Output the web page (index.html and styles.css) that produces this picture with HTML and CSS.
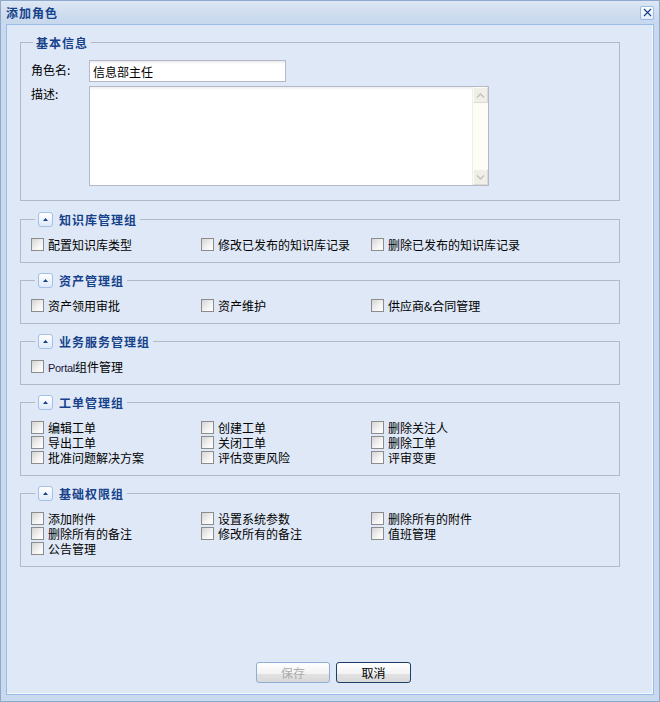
FILE: index.html
```html
<!DOCTYPE html>
<html lang="zh-CN">
<head>
<meta charset="utf-8">
<title>添加角色</title>
<link rel="stylesheet" href="styles.css">
</head>
<body>
<div class="window">
  <div class="win-header">
    <span class="win-title">添加角色</span>
    <span class="win-close"><svg width="9" height="9" viewBox="0 0 9 9"><path d="M1 1L8 8M8 1L1 8" stroke="#15428b" stroke-width="1.2" fill="none"/></svg></span>
  </div>
  <div class="win-body">
    <fieldset class="fs fs-first">
      <legend class="lg lg-plain">基本信息</legend>
      <div class="form-row">
        <label class="f-label">角色名:</label>
        <input class="text-input" type="text" value="信息部主任">
      </div>
      <div class="form-row form-row-ta">
        <label class="f-label f-label-ta">描述:</label>
        <div class="ta">
          <div class="sb">
            <span class="sb-btn"><svg width="9" height="5" viewBox="0 0 9 5"><path d="M1 4.5L4.5 1L8 4.5" stroke="#c4c4bc" stroke-width="1.5" fill="none"/></svg></span>
            <span class="sb-track"></span>
            <span class="sb-btn"><svg width="9" height="5" viewBox="0 0 9 5"><path d="M1 0.5L4.5 4L8 0.5" stroke="#c4c4bc" stroke-width="1.5" fill="none"/></svg></span>
          </div>
        </div>
      </div>
    </fieldset>

    <fieldset class="fs">
      <legend class="lg"><span class="lg-in"><span class="tg"><svg width="5" height="3" viewBox="0 0 5 3"><path d="M0 3L2.5 0L5 3Z" fill="#15428b"/></svg></span><span class="lg-text">知识库管理组</span></span></legend>
      <div class="cbs">
        <label class="cb"><span class="cb-box"></span><span class="cb-text">配置知识库类型</span></label>
        <label class="cb"><span class="cb-box"></span><span class="cb-text">修改已发布的知识库记录</span></label>
        <label class="cb"><span class="cb-box"></span><span class="cb-text">删除已发布的知识库记录</span></label>
      </div>
    </fieldset>

    <fieldset class="fs">
      <legend class="lg"><span class="lg-in"><span class="tg"><svg width="5" height="3" viewBox="0 0 5 3"><path d="M0 3L2.5 0L5 3Z" fill="#15428b"/></svg></span><span class="lg-text">资产管理组</span></span></legend>
      <div class="cbs">
        <label class="cb"><span class="cb-box"></span><span class="cb-text">资产领用审批</span></label>
        <label class="cb"><span class="cb-box"></span><span class="cb-text">资产维护</span></label>
        <label class="cb"><span class="cb-box"></span><span class="cb-text">供应商&amp;合同管理</span></label>
      </div>
    </fieldset>

    <fieldset class="fs">
      <legend class="lg"><span class="lg-in"><span class="tg"><svg width="5" height="3" viewBox="0 0 5 3"><path d="M0 3L2.5 0L5 3Z" fill="#15428b"/></svg></span><span class="lg-text">业务服务管理组</span></span></legend>
      <div class="cbs">
        <label class="cb"><span class="cb-box"></span><span class="cb-text"><span class="latin">Portal</span>组件管理</span></label>
      </div>
    </fieldset>

    <fieldset class="fs">
      <legend class="lg"><span class="lg-in"><span class="tg"><svg width="5" height="3" viewBox="0 0 5 3"><path d="M0 3L2.5 0L5 3Z" fill="#15428b"/></svg></span><span class="lg-text">工单管理组</span></span></legend>
      <div class="cbs">
        <label class="cb"><span class="cb-box"></span><span class="cb-text">编辑工单</span></label>
        <label class="cb"><span class="cb-box"></span><span class="cb-text">创建工单</span></label>
        <label class="cb"><span class="cb-box"></span><span class="cb-text">删除关注人</span></label>
        <label class="cb"><span class="cb-box"></span><span class="cb-text">导出工单</span></label>
        <label class="cb"><span class="cb-box"></span><span class="cb-text">关闭工单</span></label>
        <label class="cb"><span class="cb-box"></span><span class="cb-text">删除工单</span></label>
        <label class="cb"><span class="cb-box"></span><span class="cb-text">批准问题解决方案</span></label>
        <label class="cb"><span class="cb-box"></span><span class="cb-text">评估变更风险</span></label>
        <label class="cb"><span class="cb-box"></span><span class="cb-text">评审变更</span></label>
      </div>
    </fieldset>

    <fieldset class="fs">
      <legend class="lg"><span class="lg-in"><span class="tg"><svg width="5" height="3" viewBox="0 0 5 3"><path d="M0 3L2.5 0L5 3Z" fill="#15428b"/></svg></span><span class="lg-text">基础权限组</span></span></legend>
      <div class="cbs">
        <label class="cb"><span class="cb-box"></span><span class="cb-text">添加附件</span></label>
        <label class="cb"><span class="cb-box"></span><span class="cb-text">设置系统参数</span></label>
        <label class="cb"><span class="cb-box"></span><span class="cb-text">删除所有的附件</span></label>
        <label class="cb"><span class="cb-box"></span><span class="cb-text">删除所有的备注</span></label>
        <label class="cb"><span class="cb-box"></span><span class="cb-text">修改所有的备注</span></label>
        <label class="cb"><span class="cb-box"></span><span class="cb-text">值班管理</span></label>
        <label class="cb"><span class="cb-box"></span><span class="cb-text">公告管理</span></label>
      </div>
    </fieldset>

    <div class="footer">
      <button class="btn btn-disabled" type="button">保存</button>
      <button class="btn btn-focus" type="button">取消</button>
    </div>
  </div>
</div>
</body>
</html>
```

FILE: styles.css
```css
* {
  box-sizing: border-box;
}

html,
body {
  margin: 0;
  padding: 0;
}

body {
  width: 660px;
  height: 702px;
  font-family: "Noto Sans CJK SC", "Liberation Sans", sans-serif;
  font-size: 12px;
  color: #000;
  background: #c8d8ed;
}

.window {
  width: 660px;
  height: 702px;
  border: 1px solid #8ea9cc;
  background: #c9d9ee;
  padding: 0 5px 6px;
  display: flex;
  flex-direction: column;
}

.win-header {
  height: 23px;
  flex: none;
  display: flex;
  align-items: center;
  justify-content: space-between;
  margin: 0 -5px;
  padding: 0 5px;
  background: linear-gradient(#dde7f4, #cddcef 60%, #c8d8ed);
}

.win-title {
  font-weight: bold;
  color: #15428b;
  letter-spacing: 1px;
  line-height: 14px;
}

.win-close {
  width: 14px;
  height: 14px;
  border: 1px solid #99bbe8;
  border-radius: 2px;
  background: linear-gradient(#ffffff, #e4edf9);
  display: flex;
  align-items: center;
  justify-content: center;
}

.win-body {
  flex: 1;
  border: 1px solid #99bbe8;
  background: #dfe8f6;
  padding: 10px 0 0 13px;
  display: flex;
  flex-direction: column;
  box-shadow: inset -1px -1px 0 #f4f8fd;
}

.fs {
  width: 600px;
  min-inline-size: 0;
  margin: 0 0 10px 0;
  padding: 10px;
  border: 1px solid #b5b8c8;
}

.fs-first {
  margin-bottom: 11px;
}

.lg {
  height: 15px;
  margin-left: 4px;
  padding: 0 3px;
  color: #15428b;
  font-weight: bold;
  letter-spacing: 1px;
  line-height: 15px;
}

.lg-plain {
  margin-left: 2px;
  padding: 0 3px 0 3px;
}

.lg-in {
  display: flex;
  align-items: center;
  height: 15px;
}

.tg {
  width: 15px;
  height: 15px;
  flex: none;
  border: 1px solid #a3c0e8;
  border-radius: 3px;
  background: linear-gradient(#ffffff, #dfe9f8);
  display: flex;
  align-items: center;
  justify-content: center;
  margin-right: 6px;
}

.tg svg {
  display: block;
}

.form-row {
  display: flex;
  margin-bottom: 4px;
}

.form-row-ta {
  margin-bottom: 4px;
}

.f-label {
  width: 58px;
  flex: none;
  padding-top: 3px;
  line-height: 14px;
}

.f-label-ta {
  padding-top: 1px;
}

.text-input {
  width: 197px;
  height: 22px;
  border: 1px solid #b5b8c8;
  background: linear-gradient(#eaeaea, #ffffff 3px);
  padding: 0 3px;
  font-family: "Noto Sans CJK SC", "Liberation Sans", sans-serif;
  font-size: 12px;
  color: #000;
  outline: none;
}

.ta {
  width: 400px;
  height: 100px;
  border: 1px solid #b5b8c8;
  background: linear-gradient(#eeeeee, #ffffff 3px);
  display: flex;
  justify-content: flex-end;
}

.sb {
  width: 16px;
  display: flex;
  flex-direction: column;
  background: #fdfdf6;
  border-left: 1px solid #efefe9;
}

.sb-btn {
  height: 16px;
  flex: none;
  background: #efeee7;
  border: 1px solid #fbfbf8;
  border-right-color: #dcdbd3;
  border-bottom-color: #dcdbd3;
  display: flex;
  align-items: center;
  justify-content: center;
}

.sb-track {
  flex: 1;
}

.cbs {
  display: grid;
  grid-template-columns: repeat(3, 170px);
  grid-auto-rows: 15px;
}

.cb {
  display: flex;
  align-items: center;
  white-space: nowrap;
  height: 15px;
  overflow: visible;
}

.cb-text {
  display: block;
  height: 15px;
  line-height: 15px;
}

.cb-box {
  width: 13px;
  height: 13px;
  flex: none;
  border: 1px solid #8c8c8c;
  background: linear-gradient(135deg, #d4d4d4, #f4f4f4 60%, #ffffff);
  margin-right: 4px;
}

.latin {
  font-family: "Liberation Sans", sans-serif;
  font-size: 11px;
  letter-spacing: -0.3px;
  color: #1a1a3a;
}

.footer {
  margin-top: auto;
  margin-left: -13px;
  padding: 0 0 11px 7px;
  display: flex;
  justify-content: center;
  gap: 6px;
}

.btn {
  height: 21px;
  width: 74px;
  padding: 0;
  border: 1px solid #8eaed4;
  border-radius: 3px;
  background: linear-gradient(#ffffff, #f3f3f3 55%, #e2e2e2 60%, #d8d8d8);
  font-family: "Noto Sans CJK SC", "Liberation Sans", sans-serif;
  font-size: 12px;
  line-height: 19px;
}

.btn-disabled {
  color: #ababab;
}

.btn-focus {
  width: 75px;
  color: #000;
  border-color: #1d3f6a;
}
```
